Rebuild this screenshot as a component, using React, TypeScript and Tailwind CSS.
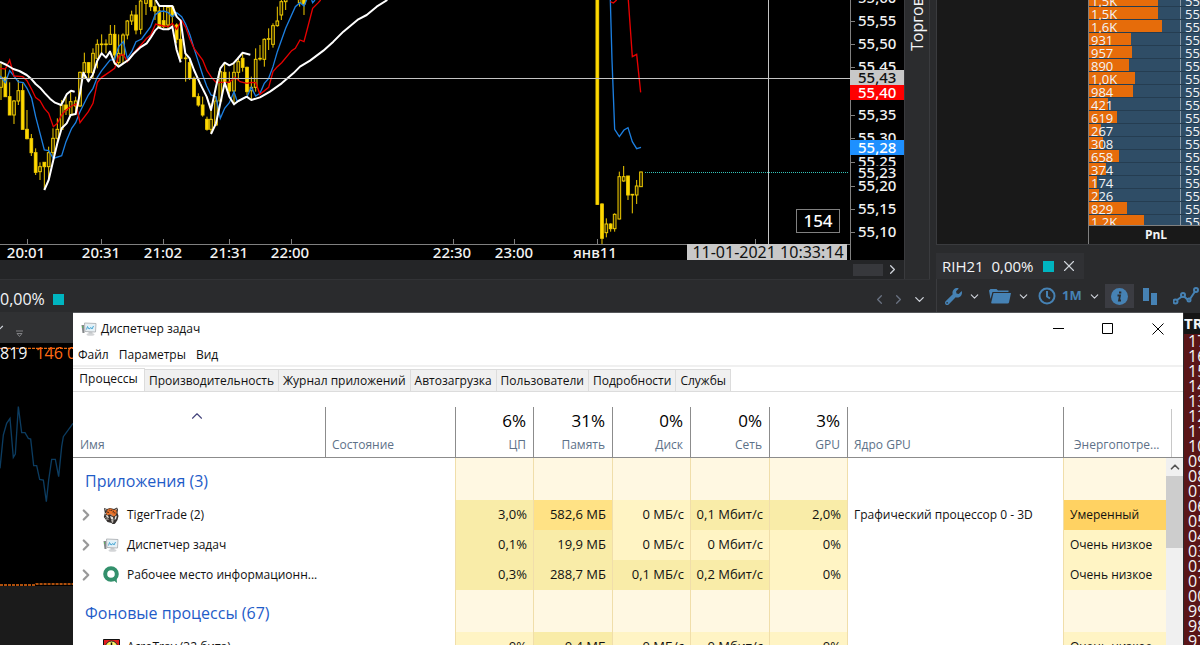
import { ChevronDown, ChevronLeft, ChevronRight, ChevronUp, X } from 'lucide-react';
import { FaWrench } from 'react-icons/fa';

// [x, high, low, top, bottom, filled], three units per pixel
const candles = [
    [3, 190, 300, 232, 262, 0], [16, 205, 290, 232, 290, 1], [29, 247, 345, 290, 345, 1],
    [42, 300, 372, 303, 345, 0], [55, 240, 315, 272, 303, 0], [68, 250, 388, 272, 388, 1],
    [81, 330, 418, 388, 416, 1], [94, 402, 468, 416, 458, 1], [107, 445, 525, 458, 517, 1],
    [120, 487, 540, 500, 515, 0], [133, 487, 570, 487, 500, 1], [146, 440, 540, 458, 500, 0],
    [159, 385, 470, 415, 458, 0], [172, 355, 430, 388, 415, 0], [185, 300, 388, 315, 388, 0],
    [198, 290, 345, 315, 330, 1], [212, 275, 345, 305, 345, 0], [227, 290, 345, 303, 318, 0],
    [240, 215, 320, 217, 318, 0], [253, 158, 235, 188, 217, 0], [266, 186, 240, 188, 218, 1],
    [279, 145, 235, 160, 218, 0], [292, 118, 205, 133, 175, 0], [305, 103, 160, 132, 134, 0],
    [318, 118, 160, 132, 134, 0], [331, 75, 133, 103, 133, 0], [344, 75, 195, 103, 165, 1],
    [356, 103, 195, 160, 188, 0], [369, 100, 190, 105, 165, 0], [382, 60, 118, 63, 105, 0],
    [395, 32, 75, 45, 63, 0], [408, 15, 103, 45, 90, 1], [422, 0, 103, 3, 88, 0],
    [438, -5, 45, -20, 10, 0], [452, -5, 33, -20, 20, 1], [465, -5, 60, 20, 33, 1],
    [478, 20, 85, 33, 80, 1], [491, 20, 85, 62, 80, 1], [504, 20, 88, 22, 75, 0],
    [517, 18, 88, 20, 48, 1], [530, 70, 130, 75, 118, 1], [542, 60, 185, 118, 175, 1],
    [557, 160, 245, 174, 176, 0], [569, 175, 240, 188, 235, 1], [582, 230, 290, 235, 290, 1],
    [595, 280, 320, 290, 315, 1], [608, 290, 350, 315, 345, 1], [621, 350, 392, 358, 388, 1],
    [633, 310, 400, 358, 388, 0], [648, 290, 378, 303, 375, 0], [661, 210, 310, 215, 303, 0],
    [674, 190, 250, 217, 247, 1], [688, 215, 290, 247, 273, 1], [702, 190, 310, 217, 273, 0],
    [715, 175, 240, 185, 217, 0], [728, 160, 215, 175, 202, 1], [741, 200, 285, 202, 275, 1],
    [754, 230, 300, 262, 272, 0], [767, 145, 275, 178, 262, 0], [780, 135, 182, 175, 177, 0],
    [793, 115, 200, 118, 178, 0], [806, 85, 150, 116, 118, 0], [819, 70, 143, 77, 133, 0],
    [832, 20, 80, 63, 77, 0], [844, 0, 60, 5, 45, 0], [857, -5, 30, -20, 5, 0],
    [899, -5, 20, -20, 8, 0], [912, -5, 45, -20, 12, 1],
    [1792, -10, 615, -10, 613, 1], [1806, 610, 733, 612, 715, 1], [1819, 655, 712, 672, 698, 0],
    [1832, 670, 695, 672, 686, 1], [1844, 640, 695, 643, 686, 0], [1858, 515, 658, 530, 657, 0],
    [1871, 498, 545, 530, 543, 0], [1884, 528, 600, 528, 585, 1], [1897, 582, 640, 583, 585, 0],
    [1910, 540, 612, 558, 585, 0], [1923, 515, 560, 516, 560, 0],
];

const blueLines = [
    '0,228 16,248 29,212 42,228 55,246 70,248 81,265 95,295 107,350 133,450 146,452 160,475 185,467 198,425 215,385 227,368 240,335 265,285 279,265 292,232 305,212 330,180 344,178 356,140 370,125 382,175 395,155 408,125 425,117 452,80 465,45 478,35 491,33 505,38 517,50 530,38 545,50 557,72 570,105 582,145 595,185 608,225 620,258 633,285 648,290 661,355 674,325 688,308 702,275 712,305 730,295 741,290 754,262 767,288 780,280 793,250 806,235 819,200 832,155 857,85 886,20 900,8 912,18 920,0',
    '935,0 938,8 945,0',
    '1831,0 1836,180 1844,388 1858,410 1872,390 1884,383 1897,425 1910,446 1923,442',
];

const redLines = [
    '0,205 16,207 29,180 42,228 68,230 81,242 95,268 107,293 120,302 133,325 146,340 160,380 172,370 185,345 198,330 215,318 228,312 240,368 265,335 279,310 292,248 305,232 330,215 344,205 356,168 370,163 382,185 400,160 420,138 440,115 452,105 467,72 490,78 505,80 517,70 530,88 545,62 557,82 570,118 582,145 608,180 621,212 633,230 648,247 688,247 705,232 720,245 741,250 754,247 767,248 780,283 806,262 819,215 832,200 845,188 875,152 886,145 900,120 912,125 925,75 938,25 955,8 962,0',
    '1831,5 1840,9 1850,0',
    '1885,0 1897,170 1910,163 1922,277',
];

const whiteLines = [
    '0,186 20,195 40,207 58,213 80,225 95,238 107,252 120,263 135,280 150,296 165,308 183,315 190,303 200,283 213,272 224,275',
    '133,570 146,540 160,480 172,430 185,385 200,370 212,345 227,342 240,280 250,218 265,244 278,225 292,182 305,160 318,173 330,155 343,188 356,200 370,190 385,180 400,162 420,143 440,130 452,113 465,92 475,82 490,88 505,88 517,80 530,150 542,187',
    '467,0 478,18 517,18 530,50 542,62 556,160 569,175 582,210 600,250 620,290 633,330 648,260 661,205 674,188 688,196 700,190 712,177 728,158 751,164',
    '633,402 648,370 661,310 674,248 688,290 702,313 715,303 740,290 754,300 780,292 810,275 845,250 880,220 900,200 930,182 970,152 1000,125 1030,95 1075,58 1100,45 1130,20 1162,0',
];

const timeTicks = [27, 101, 163, 229, 291, 453, 514, 597, 755];

const timeLabels = [
    { x: 26, text: '20:01' },
    { x: 101, text: '20:31' },
    { x: 163, text: '21:02' },
    { x: 229, text: '21:31' },
    { x: 290, text: '22:00' },
    { x: 452, text: '22:30' },
    { x: 514, text: '23:00' },
    { x: 595, text: 'янв11' },
];

const priceLabels = [
    { y: -2, text: '55,60' },
    { y: 21, text: '55,55' },
    { y: 44, text: '55,50' },
    { y: 67, text: '55,45' },
    { y: 115, text: '55,35' },
    { y: 138, text: '55,30' },
    { y: 162, text: '55,25' },
    { y: 186, text: '55,20' },
    { y: 209, text: '55,15' },
    { y: 232, text: '55,10' },
];

const priceMarks = [
    { y: 78, text: '55,43', box: '#c8c8c8', color: '#111111' },
    { y: 93, text: '55,40', box: '#ff0000', color: '#ffffff' },
    { y: 148, text: '55,28', box: '#1e90ff', color: '#ffffff' },
];

const volumes = [
    { label: '1,5K', width: 69 },
    { label: '1,5K', width: 69 },
    { label: '1,6K', width: 73 },
    { label: '931', width: 42 },
    { label: '957', width: 43 },
    { label: '890', width: 40 },
    { label: '1,0K', width: 46 },
    { label: '984', width: 44 },
    { label: '421', width: 19 },
    { label: '619', width: 28 },
    { label: '267', width: 12 },
    { label: '308', width: 14 },
    { label: '658', width: 30 },
    { label: '374', width: 17 },
    { label: '174', width: 8 },
    { label: '226', width: 10 },
    { label: '829', width: 38 },
    { label: '1.2K', width: 55 },
];

const ladder = [
    '17', '16', '15', '14', '13', '12', '11', '10', '09', '08', '07',
    '06', '05', '04', '03', '02', '01', '00', '99', '98', '97',
];

const tabs = ['Процессы', 'Производительность', 'Журнал приложений', 'Автозагрузка', 'Пользователи', 'Подробности', 'Службы'];

const metrics = [
    { name: 'ЦП', total: '6%' },
    { name: 'Память', total: '31%' },
    { name: 'Диск', total: '0%' },
    { name: 'Сеть', total: '0%' },
    { name: 'GPU', total: '3%' },
];

const heat = ['bg-[#fff4c4]', 'bg-[#f9eca8]', 'bg-[#ffe285]', 'bg-[#ffd262]'];

type Process = {
    name: string;
    icon: 'tiger' | 'monitor' | 'quik' | 'tray';
    values: string[];
    levels: number[];
    gpu?: string;
    energy: string;
    energyLevel: number;
};

const groups: { title: string; rows: Process[] }[] = [
    {
        title: 'Приложения (3)',
        rows: [
            { name: 'TigerTrade (2)', icon: 'tiger', values: ['3,0%', '582,6 МБ', '0 МБ/с', '0,1 Мбит/с', '2,0%'], levels: [1, 2, 0, 1, 1], gpu: 'Графический процессор 0 - 3D', energy: 'Умеренный', energyLevel: 3 },
            { name: 'Диспетчер задач', icon: 'monitor', values: ['0,1%', '19,9 МБ', '0 МБ/с', '0 Мбит/с', '0%'], levels: [1, 1, 0, 0, 0], energy: 'Очень низкое', energyLevel: 0 },
            { name: 'Рабочее место информационн...', icon: 'quik', values: ['0,3%', '288,7 МБ', '0,1 МБ/с', '0,2 Мбит/с', '0%'], levels: [1, 1, 1, 1, 0], energy: 'Очень низкое', energyLevel: 0 },
        ],
    },
    {
        title: 'Фоновые процессы (67)',
        rows: [
            { name: 'AcroTray (32 бита)', icon: 'tray', values: ['0%', '0,4 МБ', '0 МБ/с', '0 Мбит/с', '0%'], levels: [0, 1, 0, 0, 0], energy: 'Очень низкое', energyLevel: 0 },
        ],
    },
];

function MonitorIcon() {
    return (
        <svg width="16" height="16" viewBox="0 0 16 16" aria-hidden="true">
            <path d="M.5 4h3v8h-2z" fill="#85898c" />
            <path d="M1 5h1v2H1z" fill="#5fb05f" />
            <path d="M3.500 2 15 2.500l-.5 8.500L4 10.500z" fill="#eceff1" stroke="#b4b9bd" />
            <path d="M5 3.500l8.500.3-.4 5.700-7.600-.3z" fill="#dff1f9" />
            <path d="M5.500 8.500 6.500 5.500 8 8l2-1.500 1 1.500 1.500-3" fill="none" stroke="#4aa5d2" />
            <path d="M7.500 11h4v2h-4z" fill="#c3c6c9" />
            <ellipse cx="9.500" cy="13.500" rx="4" ry="1.300" fill="#d3d5d7" />
        </svg>
    );
}

function TigerIcon() {
    return (
        <svg width="16" height="17" viewBox="0 0 16 17" aria-hidden="true">
            <path d="M1 1l3 1 3-1 4 1 3-1.500 1 2-.5 3.500 1 3-1 4-2 3-2 2-2-2-4-1L.8 10l1-4z" fill="#34302e" />
            <path d="M5 2l3-.5 3 1.500 2-.5.8 3-1.300 3-2 1-3-2-3.500.5L3 6z" fill="#e8722a" />
            <path d="M2 2l1.500.5L3 4zM13.500 1.500l.3 1.800-1.500-.8z" fill="#e9ded4" />
            <path d="M6 2.500l1.500 1.500M9 2.500 8.500 4M11 4l-1.500 1M4 5l2 .5M12.500 6l-2-.3" stroke="#2b1b14" strokeWidth=".8" />
            <path d="M2.500 8l2.500.5L6 11l-2-.5zM12 9.500l2-1-1 3.500-1.500 1zM7 9l3 1 .5 3L8 12zM1.500 5.500l1.500 1-.5 1.200z" fill="#e6e1dc" />
            <path d="M8 12.500l2.500.5-.3 2.500L9 16z" fill="#bcb6b1" />
            <path d="M2 10.500l3 1M3 12.500l3-.3M7.500 7.500l2 .8" stroke="#a5a09b" strokeWidth=".8" />
        </svg>
    );
}

function QuikIcon() {
    return (
        <svg width="16" height="18" viewBox="0 0 16 18" aria-hidden="true">
            <circle cx="8" cy="8" r="5.800" fill="none" stroke="#33906c" strokeWidth="4" />
            <path d="M9 13l4.500-1.500.5 5.500z" fill="#33906c" />
        </svg>
    );
}

function TrayIcon() {
    return (
        <svg width="17" height="16" viewBox="0 0 17 16" aria-hidden="true">
            <path d="M.5.5h16v15H.5z" fill="#e11d1d" stroke="#111111" />
            <circle cx="8.500" cy="8" r="6" fill="#f8f06a" stroke="#222222" />
            <path d="M8.500 3.500v5" stroke="#111111" strokeWidth="1.500" />
        </svg>
    );
}

const icons = { tiger: TigerIcon, monitor: MonitorIcon, quik: QuikIcon, tray: TrayIcon };

function PriceChart() {
    return (
        <svg className="block h-[260px] w-full bg-black font-['Noto_Sans',sans-serif] text-[15px] font-medium" viewBox="0 0 904 260" preserveAspectRatio="xMaxYMax slice" role="img" aria-label="График цены">
            <g transform="scale(0.33333)" fill="none">
                {candles.map(([x, high, low, top, bottom, filled]) => (
                    <g key={x} stroke="#f2cc00" strokeWidth="3">
                        <path d={`M${x} ${high}V${top}M${x} ${bottom}V${low}`} />
                        <rect x={x - 4} y={top} width="8" height={bottom - top} fill={filled ? '#ffd900' : '#2a2300'} />
                    </g>
                ))}
                {blueLines.map((points) => (
                    <polyline key={points} points={points} stroke="#1c7fe0" strokeWidth="4" />
                ))}
                {redLines.map((points) => (
                    <polyline key={points} points={points} stroke="#e80000" strokeWidth="4" />
                ))}
                {whiteLines.map((points) => (
                    <polyline key={points} points={points} stroke="#ffffff" strokeWidth="6" strokeLinejoin="round" />
                ))}
            </g>
            <path d="M645 172.500H849" stroke="#35c4b8" strokeDasharray="1 1" />
            <path d="M0 78.500H850M768.500 0V244" stroke="#c4c4c4" />
            <path d="M0 244.500H850M850.500 0V260" stroke="#808080" />
            {timeTicks.map((x) => (
                <path key={x} d={`M${x + 0.5} 239V244`} stroke="#808080" />
            ))}
            {timeLabels.map((label) => (
                <text key={label.x} x={label.x} y="258" textAnchor="middle" fill="#f2f2f2">
                    {label.text}
                </text>
            ))}
            <rect x="687" y="244" width="160" height="16" fill="#c8c8c8" />
            <text x="768" y="258" textAnchor="middle" fill="#111111" fontSize="16" fontWeight="400">
                11-01-2021 10:33:14
            </text>
            <rect x="796.500" y="209.500" width="43" height="23" fill="#000000" stroke="#808080" />
            <text x="818" y="227" textAnchor="middle" fill="#ffffff" fontSize="17">
                154
            </text>
            {priceLabels.map((label) => (
                <g key={label.text}>
                    <path d={`M851 ${label.y + 0.5}h4`} stroke="#808080" />
                    <text x="858" y={label.y + 5} fill="#f2f2f2">
                        {label.text}
                    </text>
                </g>
            ))}
            <rect x="856" y="166" width="46" height="13" fill="#000000" />
            <text x="858" y="178" fill="#f2f2f2">
                55,23
            </text>
            {priceMarks.map((mark) => (
                <g key={mark.text}>
                    <rect x="850" y={mark.y - 8} width="54" height="15" fill={mark.box} />
                    <text x="858" y={mark.y + 5} fill={mark.color}>
                        {mark.text}
                    </text>
                </g>
            ))}
        </svg>
    );
}

function LeftPane() {
    return (
        <div className="flex min-w-0 flex-1 flex-col">
            <div className="flex">
                <div className="flex min-w-0 flex-1 flex-col bg-[#242527]">
                    <PriceChart />
                    <div className="flex h-[19px] items-center justify-end gap-0.5 pr-1">
                        <div className="h-3 w-[30px] bg-[#37383c]" />
                        <ChevronRight size={15} className="text-gray-300" />
                    </div>
                </div>
                <div className="flex w-[26px] justify-center border-x border-[#3a3b3e] bg-[#2b2c2e]">
                    <span className="h-[51px] rotate-180 overflow-hidden whitespace-nowrap text-[16px] leading-6 font-medium [writing-mode:vertical-rl]">
                        Торговля
                    </span>
                </div>
            </div>
            <div className="flex h-[33px] items-center gap-2 border-t border-[#323336] pt-1.5 pr-[3px]">
                <span className="text-[16px]">0,00%</span>
                <span className="size-[11px] bg-[#00b5c0]" />
                <div className="ml-auto flex gap-1 text-gray-500">
                    <ChevronLeft size={15} />
                    <ChevronRight size={15} />
                    <ChevronDown size={15} className="ml-0.5 text-gray-300" />
                </div>
            </div>
            <div className="flex h-[31px] items-center gap-2.5 bg-[#303133]">
                <ChevronDown size={14} className="-ml-2 text-gray-300" />
                <svg width="7" height="8" viewBox="0 0 7 8" className="mt-3" aria-hidden="true">
                    <path d="M0 1h7M1 3.500h5L3.500 6.500z" fill="none" stroke="#808184" />
                </svg>
            </div>
            <div className="relative min-h-0 flex-1 bg-[#1b1b1b]">
                <svg width="73" height="243" viewBox="0 0 219 729" className="block bg-black" aria-hidden="true">
                    <g fill="none" strokeWidth="4">
                        <polyline points="0,376 10,276 20,241 30,226 40,343 46,333 55,191 65,269 75,269 85,286 92,288 101,368 110,368 119,409 130,411 139,476 146,411 155,349 166,349 176,401 185,311 190,281 219,241" stroke="#0c3c60" />
                        <path d="M0 726H105L108 723H219M0 16H219" stroke="#e86a10" strokeDasharray="9 3" />
                    </g>
                </svg>
                <p className="absolute top-0 left-0 flex gap-2 text-[16px] leading-5 font-medium">
                    <span>819</span>
                    <span className="whitespace-nowrap text-[#ff6a13]">146 0</span>
                </p>
            </div>
        </div>
    );
}

function RightPane() {
    return (
        <div className="flex w-[270px] shrink-0 flex-col pl-[6px]">
            <div className="flex h-[245px] border-b border-l border-[#3a3b3e] bg-[#191919]">
                <div className="flex-1 border-r border-[#808080]" />
                <div className="flex w-[111px] flex-col overflow-hidden">
                    <div className="h-[227px] overflow-hidden border-b border-[#808080] bg-[#2f4d66] text-[13px] font-medium">
                        <ul className="-mt-1.5">
                            {volumes.map((row, i) => (
                                <li key={i} className="flex h-[13px] border-b border-black/20 leading-[14px]">
                                    <div className="relative w-[92px] shrink-0 border-r border-[#8a98a4]">
                                        <div className="h-3 bg-[#e66c0a]" style={{ width: row.width }} />
                                        <span className="absolute top-0 left-0.5">{row.label}</span>
                                    </div>
                                    <span className="w-6 pl-1">55,</span>
                                </li>
                            ))}
                        </ul>
                    </div>
                    <p className="w-[134px] text-center text-[12px] leading-[18px] font-bold">PnL</p>
                </div>
            </div>
            <div className="flex h-[34px] items-end">
                <div className="flex h-[26px] items-center gap-2.5 bg-[#303134] px-1.5 text-[15px]">
                    <span className="whitespace-pre">RIH21  0,00%</span>
                    <span className="size-[11px] bg-[#00b5c0]" />
                    <button aria-label="Закрыть вкладку" className="-ml-1 text-gray-300">
                        <X size={18} strokeWidth={1.5} />
                    </button>
                </div>
            </div>
            <div className="flex h-[34px] shrink-0 items-center overflow-hidden border-l border-[#3a3b3e] pl-2 text-[#4682b4]">
                <button aria-label="Настройки"><FaWrench size={17} /></button>
                <ChevronDown size={13} className="ml-1.5 shrink-0 text-gray-300" />
                <button aria-label="Открыть" className="ml-2 shrink-0">
                    <svg width="22" height="16" viewBox="0 0 22 16" fill="currentColor">
                        <path d="M0 2.500 1.500 1h6l1.500 1.500h10.500V4H3.500L1.500 11z" />
                        <path d="M4.500 5H22l-2 9.500q-.3 1-1.500 1H3q-1 0-.8-1z" />
                    </svg>
                </button>
                <ChevronDown size={13} className="ml-1.5 shrink-0 text-gray-300" />
                <svg width="18" height="18" viewBox="0 0 18 18" className="ml-2 shrink-0" fill="none" stroke="currentColor" strokeWidth="2" aria-hidden="true">
                    <circle cx="9" cy="9" r="7.500" />
                    <path d="M9 4v5.500l3 2" />
                </svg>
                <span className="ml-1.5 text-[13px] font-bold">1M</span>
                <ChevronDown size={13} className="ml-1.5 shrink-0 text-gray-300" />
                <button aria-label="Информация" className="ml-1 flex h-6 w-[29px] shrink-0 items-center justify-center bg-[#3b3c42]">
                    <svg width="17" height="17" viewBox="0 0 17 17">
                        <circle cx="8.500" cy="8.500" r="8.500" fill="currentColor" />
                        <path d="M8 4.500h2.300M6.500 7.500h2.500l-1 5h2" fill="none" stroke="#2b2c2e" strokeWidth="1.800" />
                    </svg>
                </button>
                <svg width="17" height="17" viewBox="0 0 17 17" className="ml-2 shrink-0" fill="currentColor" aria-hidden="true">
                    <path d="M1 0h6v13H1zM9 5h6v12H9z" />
                </svg>
                <svg width="26" height="18" viewBox="0 0 26 18" className="ml-3.5 shrink-0" fill="none" stroke="currentColor" strokeWidth="2" aria-hidden="true">
                    <path d="M4 13 9 9.500M11 9.500l3.500 3M17 12l5-7.500" />
                    <circle cx="2.500" cy="14.500" r="2" />
                    <circle cx="10" cy="8" r="2" />
                    <circle cx="16" cy="13" r="1.500" />
                    <circle cx="23" cy="3" r="2" />
                </svg>
            </div>
            <div className="flex flex-1 flex-col items-end overflow-hidden">
                <div className="flex w-4 flex-1 flex-col bg-[#5a1517]">
                    <p className="h-[21px] shrink-0 overflow-hidden bg-[#151515] text-[15px] leading-[21px] font-bold">TR</p>
                    {ladder.map((price) => (
                        <p key={price} className="h-[15px] shrink-0 overflow-hidden pl-1 text-[16px] leading-[15px]">{price}</p>
                    ))}
                </div>
            </div>
        </div>
    );
}

function ProcessRow({ process }: { process: Process }) {
    const Icon = icons[process.icon];
    return (
        <tr className="h-[30px]">
            <td>
                <div className="flex items-center pl-1">
                    <button aria-label="Развернуть" className={process.icon === 'tray' ? 'invisible' : 'text-[#999999]'}>
                        <ChevronRight size={18} strokeWidth={3} />
                    </button>
                    <span className="mx-[7px] flex w-[18px] shrink-0 justify-center"><Icon /></span>
                    <span className="whitespace-nowrap">{process.name}</span>
                </div>
            </td>
            <td />
            {process.values.map((value, i) => (
                <td key={i} className={`border-l border-[#f0deaa] pr-1.5 text-right text-[13px] whitespace-nowrap ${heat[process.levels[i]]}`}>
                    {value}
                </td>
            ))}
            <td className="border-l border-[#f0deaa] pl-1.5 whitespace-nowrap">{process.gpu}</td>
            <td className={`border-l border-[#f0deaa] pl-1.5 whitespace-nowrap ${heat[process.energyLevel]}`}>{process.energy}</td>
        </tr>
    );
}

function TaskManager() {
    return (
        <section className="absolute top-[312px] right-[17px] bottom-0 left-[73px] overflow-hidden border-t border-[#55575a] bg-white text-[12px] text-[#111111]">
            <header className="flex h-8 items-center gap-1 pl-2">
                <MonitorIcon />
                <h1>Диспетчер задач</h1>
                <div className="ml-auto flex gap-[34px] pr-[17px] text-black">
                    <button aria-label="Свернуть">
                        <svg width="16" height="16" viewBox="0 0 16 16"><path d="M3 7.500h11" stroke="currentColor" /></svg>
                    </button>
                    <button aria-label="Развернуть окно">
                        <svg width="16" height="16" viewBox="0 0 16 16"><path d="M2.500 2.500h10v10h-10z" fill="none" stroke="currentColor" /></svg>
                    </button>
                    <button aria-label="Закрыть">
                        <svg width="16" height="16" viewBox="0 0 16 16"><path d="M2.500 2.500l11 11M13.500 2.500l-11 11" stroke="currentColor" /></svg>
                    </button>
                </div>
            </header>
            <nav className="flex h-[22px] items-center gap-2.5 border-b-2 border-[#f0f0f0] pl-[5px]">
                <button>Файл</button>
                <button>Параметры</button>
                <button>Вид</button>
            </nav>
            <div role="tablist" className="flex h-[25px] items-end border-b border-[#dcdcdc] pt-0.5">
                {tabs.map((tab, i) => (
                    <button
                        key={tab}
                        role="tab"
                        aria-selected={i === 0}
                        className={i === 0
                            ? 'h-[23px] w-[72px] pb-0.5 whitespace-nowrap border-t border-r border-[#dcdcdc] bg-white'
                            : 'h-[22px] px-1 whitespace-nowrap border-t border-r border-[#dcdcdc] bg-[#f0f0f0]'}
                    >
                        {tab}
                    </button>
                ))}
            </div>
            <table className="mt-[15px] w-full table-fixed border-separate border-spacing-0">
                <colgroup>
                    <col className="w-[252px]" />
                    <col className="w-[130px]" />
                    <col className="w-[78px]" />
                    <col className="w-[79px]" />
                    <col className="w-[78px]" />
                    <col className="w-[79px]" />
                    <col className="w-[78px]" />
                    <col />
                    <col className="w-[103px]" />
                    <col className="w-[17px]" />
                </colgroup>
                <thead>
                    <tr className="h-[50px] align-bottom text-[#5d7188] *:border-b *:border-[#8c8c8c] *:font-normal">
                        <th className="pr-3 pl-[7px] text-left">
                            <ChevronUp size={18} strokeWidth={1.5} className="mx-auto mb-2 text-[#44447c]" />
                            <span className="block leading-6">Имя</span>
                        </th>
                        <th className="border-l border-l-[#c8c8c8] pl-1.5 text-left leading-6">Состояние</th>
                        {metrics.map((metric) => (
                            <th key={metric.name} className="border-l border-l-[#c8c8c8] pr-[7px] text-right">
                                <span className="block text-[17px] leading-6 text-black">{metric.total}</span>
                                <span className="block leading-6">{metric.name}</span>
                            </th>
                        ))}
                        <th className="border-l border-l-[#c8c8c8] pl-1.5 text-left leading-6">Ядро GPU</th>
                        <th className="border-l border-l-[#c8c8c8] pl-2.5 text-left leading-6 whitespace-nowrap">Энергопотре...</th>
                        <th><span className="ml-[5px] block h-12 border-l border-[#c8c8c8]" /></th>
                    </tr>
                </thead>
                {groups.map((group, g) => (
                    <tbody key={group.title}>
                        <tr className="h-[42px]">
                            <th scope="rowgroup" colSpan={2} className="pt-1 pl-3 text-left text-[16px] font-normal text-[#1f5cc8]">
                                {group.title}
                            </th>
                            {metrics.map((metric) => (
                                <td key={metric.name} className="border-l border-[#f0deaa] bg-[#fff8e2]" />
                            ))}
                            <td className="border-l border-[#f0deaa]" />
                            <td className="border-l border-[#f0deaa] bg-[#fff8e2]" />
                            <td rowSpan={group.rows.length + 1} className="bg-[#f0f0f0] align-top">
                                {g === 0 && (
                                    <>
                                        <button aria-label="Прокрутить вверх" className="flex h-[18px] w-full items-center justify-center text-[#555555]">
                                            <ChevronUp size={14} strokeWidth={3} />
                                        </button>
                                        <div className="h-[72px] bg-[#cdcdcd]" />
                                    </>
                                )}
                            </td>
                        </tr>
                        {group.rows.map((process) => (
                            <ProcessRow key={process.name} process={process} />
                        ))}
                    </tbody>
                ))}
            </table>
        </section>
    );
}

export default function App() {
    return (
        <main className="relative flex h-screen overflow-hidden bg-[#2a2b2d] font-['Open_Sans','Noto_Sans',sans-serif] text-gray-100">
            <LeftPane />
            <RightPane />
            <TaskManager />
        </main>
    );
}
